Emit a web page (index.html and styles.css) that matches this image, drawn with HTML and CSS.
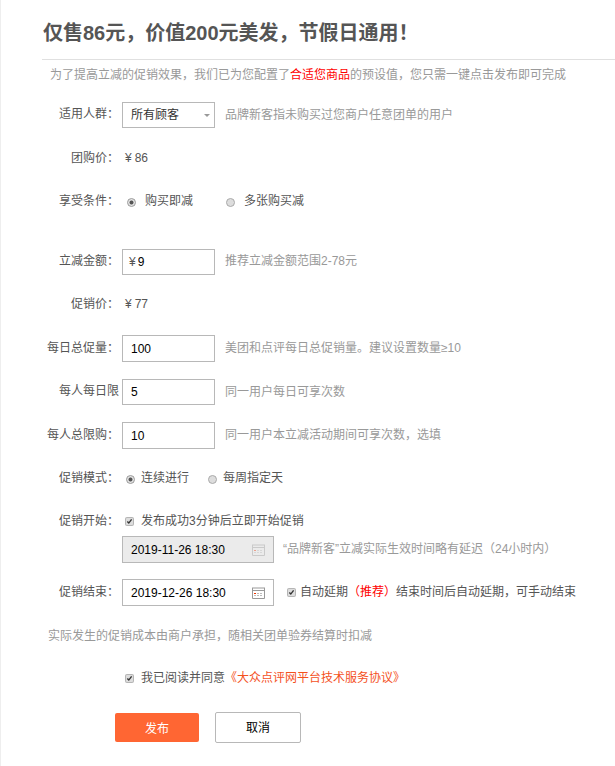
FILE: index.html
```html
<!DOCTYPE html>
<html lang="zh-CN">

<head>
    <meta charset="utf-8" />
    <title>立减促销</title>
    <link rel="stylesheet" href="styles.css">
</head>

<body>
    <div class="page">
        <h1 class="title">仅售86元，价值200元美发，节假日通用！</h1>
        <p class="notice">为了提高立减的促销效果，我们已为您配置了<span class="red">合适您商品</span>的预设值，您只需一键点击发布即可完成</p>
        <form class="form">
            <div class="row tall">
                <label class="label">适用人群<span class="colon">：</span></label>
                <div class="field select">所有顾客<i class="arrow"></i></div>
                <span class="hint">品牌新客指未购买过您商户任意团单的用户</span>
            </div>
            <div class="row">
                <label class="label">团购价<span class="colon">：</span></label>
                <span class="price"><i class="yen">¥</i>86</span>
            </div>
            <div class="row">
                <label class="label">享受条件<span class="colon">：</span></label>
                <label class="option buy"><input class="radio" type="radio" name="condition" checked>购买即减</label>
                <label class="option"><input class="radio" type="radio" name="condition">多张购买减</label>
            </div>
            <div class="row tall section">
                <label class="label">立减金额<span class="colon">：</span></label>
                <div class="field money"><i class="yen">¥</i><input class="money-input" type="text" value="9"></div>
                <span class="hint">推荐立减金额范围2-78元</span>
            </div>
            <div class="row sale">
                <label class="label">促销价<span class="colon">：</span></label>
                <span class="price"><i class="yen">¥</i>77</span>
            </div>
            <div class="row">
                <label class="label">每日总促量<span class="colon">：</span></label>
                <input class="field high" type="text" value="100">
                <span class="hint">美团和点评每日总促销量。建议设置数量≥10</span>
            </div>
            <div class="row tall">
                <label class="label">每人每日限</label>
                <input class="field" type="text" value="5">
                <span class="hint">同一用户每日可享次数</span>
            </div>
            <div class="row">
                <label class="label">每人总限购<span class="colon">：</span></label>
                <input class="field high" type="text" value="10">
                <span class="hint">同一用户本立减活动期间可享次数，选填</span>
            </div>
            <div class="row">
                <label class="label">促销模式<span class="colon">：</span></label>
                <label class="option mode"><input class="radio" type="radio" name="mode" checked>连续进行</label>
                <label class="option mode"><input class="radio" type="radio" name="mode">每周指定天</label>
            </div>
            <div class="row start">
                <label class="label">促销开始<span class="colon">：</span></label>
                <label class="check"><span class="checkbox"><svg viewBox="0 0 9 9"><path d="M1.7 4.6 3.6 6.5 7.2 1.8" /></svg></span>发布成功3分钟后立即开始促销</label>
            </div>
            <div class="row date-row">
                <div class="field high date disabled">
                    2019-11-26 18:30
                    <svg class="calendar" viewBox="0 0 13 12">
                        <path class="frame" d="M.5 1v10.5h12V1" />
                        <path class="bar" d="M0 1h13M0 3.5h13" />
                        <path class="days" d="M5 6.5h6M2 8.5h9" />
                        <path class="today" d="M2 6.5h2" />
                    </svg>
                </div>
                <span class="hint date-hint">“品牌新客”立减实际生效时间略有延迟（24小时内）</span>
            </div>
            <div class="row end">
                <label class="label">促销结束<span class="colon">：</span></label>
                <div class="field high date">
                    2019-12-26 18:30
                    <svg class="calendar" viewBox="0 0 13 12">
                        <path class="frame" d="M.5 1v10.5h12V1" />
                        <path class="bar" d="M0 1h13M0 3.5h13" />
                        <path class="days" d="M5 6.5h6M2 8.5h9" />
                        <path class="today" d="M2 6.5h2" />
                    </svg>
                </div>
                <label class="check delay"><span class="checkbox"><svg viewBox="0 0 9 9"><path d="M1.7 4.6 3.6 6.5 7.2 1.8" /></svg></span>自动延期<span class="red">（推荐）</span>结束时间后自动延期，可手动结束</label>
            </div>
            <div class="row cost">实际发生的促销成本由商户承担，随相关团单验券结算时扣减</div>
            <div class="row agree">
                <label class="check"><span class="checkbox"><svg viewBox="0 0 9 9"><path d="M1.7 4.6 3.6 6.5 7.2 1.8" /></svg></span>我已阅读并同意<a class="link">《大众点评网平台技术服务协议》</a></label>
            </div>
            <div class="buttons">
                <button class="button primary" type="button">发布</button>
                <button class="button" type="button">取消</button>
            </div>
        </form>
    </div>
</body>

</html>
```

FILE: styles.css
```css
* {
    box-sizing: border-box;
}

body {
    margin: 0;
    background: #fff;
    color: #555;
    font-size: 12px;
    line-height: 18px;
    font-family: "Liberation Sans", "Noto Sans CJK SC", sans-serif;
}

input,
button {
    font-family: inherit;
    font-size: 12px;
}

i {
    font-style: normal;
}

.page {
    height: 766px;
    border-left: 1px solid #eee;
    overflow: hidden;
    white-space: nowrap;
}

.title {
    height: 60px;
    margin: 0 0 0 41px;
    padding: 18px 0 0 1px;
    border-bottom: 1px solid #e0e0e0;
    font-size: 20px;
    line-height: 30px;
}

.notice {
    height: 33px;
    margin: 0;
    padding: 6px 0 0 49px;
    color: #999;
}

.red {
    color: #f00;
}

.row {
    display: flex;
    align-items: center;
    height: 43px;
}

.row.tall {
    height: 44px;
}

.row.section {
    margin-top: 17px;
}

.row.sale {
    padding-bottom: 2px;
}

.label {
    width: 118px;
    margin-right: 3px;
    padding-bottom: 2px;
    text-align: right;
}

/* half-width colon, kept close to the label text */
.colon {
    margin-right: 6px;
    font-feature-settings: "halt";
}

.field {
    display: flex;
    align-items: center;
    width: 93px;
    height: 26px;
    margin: 0;
    padding: 0 8px;
    border: 1px solid #b8b8b8;
    border-radius: 0;
    outline: none;
    background: #fff;
    color: #000;
}

.field.high {
    height: 27px;
}

.select {
    justify-content: space-between;
    padding-right: 4px;
    color: #333;
}

.arrow {
    border: 3px solid transparent;
    border-top-color: #999;
    border-bottom: 0;
}

.hint {
    margin-left: 10px;
    padding-bottom: 1px;
    color: #999;
}

.section .hint {
    padding-bottom: 2px;
}

.price {
    padding: 0 0 1px 3px;
}

.yen {
    margin-right: 3px;
}

.money {
    padding: 0 6px;
}

.money .yen {
    margin-right: 2px;
    color: #555;
}

.money-input {
    width: 60px;
    padding: 0;
    border: 0;
    outline: none;
}

.option {
    display: flex;
    align-items: center;
    margin-right: 28px;
    padding: 0 0 2px 5px;
}

.radio {
    appearance: none;
    width: 9px;
    height: 9px;
    margin: 4px 9px 0 0;
    border: 1px solid #aaa;
    border-radius: 50%;
    background: #ddd;
}

.radio:checked {
    border-color: #999;
    background: radial-gradient(circle, #555 0, #555 1.6px, #e4e4e4 2.4px);
}

.option.mode {
    margin-right: 15px;
    padding-left: 4px;
}

.mode .radio {
    margin-right: 6px;
}

.row.start {
    height: 36px;
    padding-top: 7px;
}

.check {
    display: flex;
    align-items: center;
    padding: 0 0 1px 4px;
}

.checkbox {
    display: flex;
    width: 7px;
    height: 7px;
    margin: 1px 8px 0 0;
    border-radius: 1px;
    background: #ddd;
    box-shadow: 0 0 0 1px #b5b5b5;
}

.checkbox svg {
    width: 7px;
    height: 7px;
    fill: none;
    stroke: #333;
    stroke-width: 1.8;
}

.row.date-row {
    height: 27px;
    padding-left: 121px;
}

.date {
    justify-content: space-between;
    width: 152px;
}

.date.disabled {
    background: #ebebeb;
}

.calendar {
    width: 13px;
    height: 12px;
    fill: none;
}

.frame,
.bar {
    stroke: #999;
}

.bar {
    stroke-width: 1;
}

.days {
    stroke: #bbb;
    stroke-dasharray: 2 1;
}

.today {
    stroke: #e30;
}

.disabled .calendar {
    opacity: .4;
}

.date-hint {
    margin-left: 9px;
}

.row.end {
    margin-top: 8px;
}

.delay {
    padding-left: 14px;
}

.delay .checkbox {
    margin-right: 5px;
}

.row.cost {
    padding-left: 47px;
    color: #999;
}

.row.agree {
    height: 42px;
    padding-left: 121px;
}

.link {
    color: #f4511e;
}

.buttons {
    display: flex;
    align-items: center;
    margin: 13px 0 0 114px;
    gap: 16px;
}

.button {
    width: 86px;
    height: 31px;
    padding: 0 0 2px;
    border: 1px solid #b8b8b8;
    border-radius: 2px;
    background: #fff;
    color: #000;
}

.button.primary {
    width: 84px;
    height: 29px;
    padding: 0;
    border: 0;
    background: #f63;
    color: #fff;
}
```
